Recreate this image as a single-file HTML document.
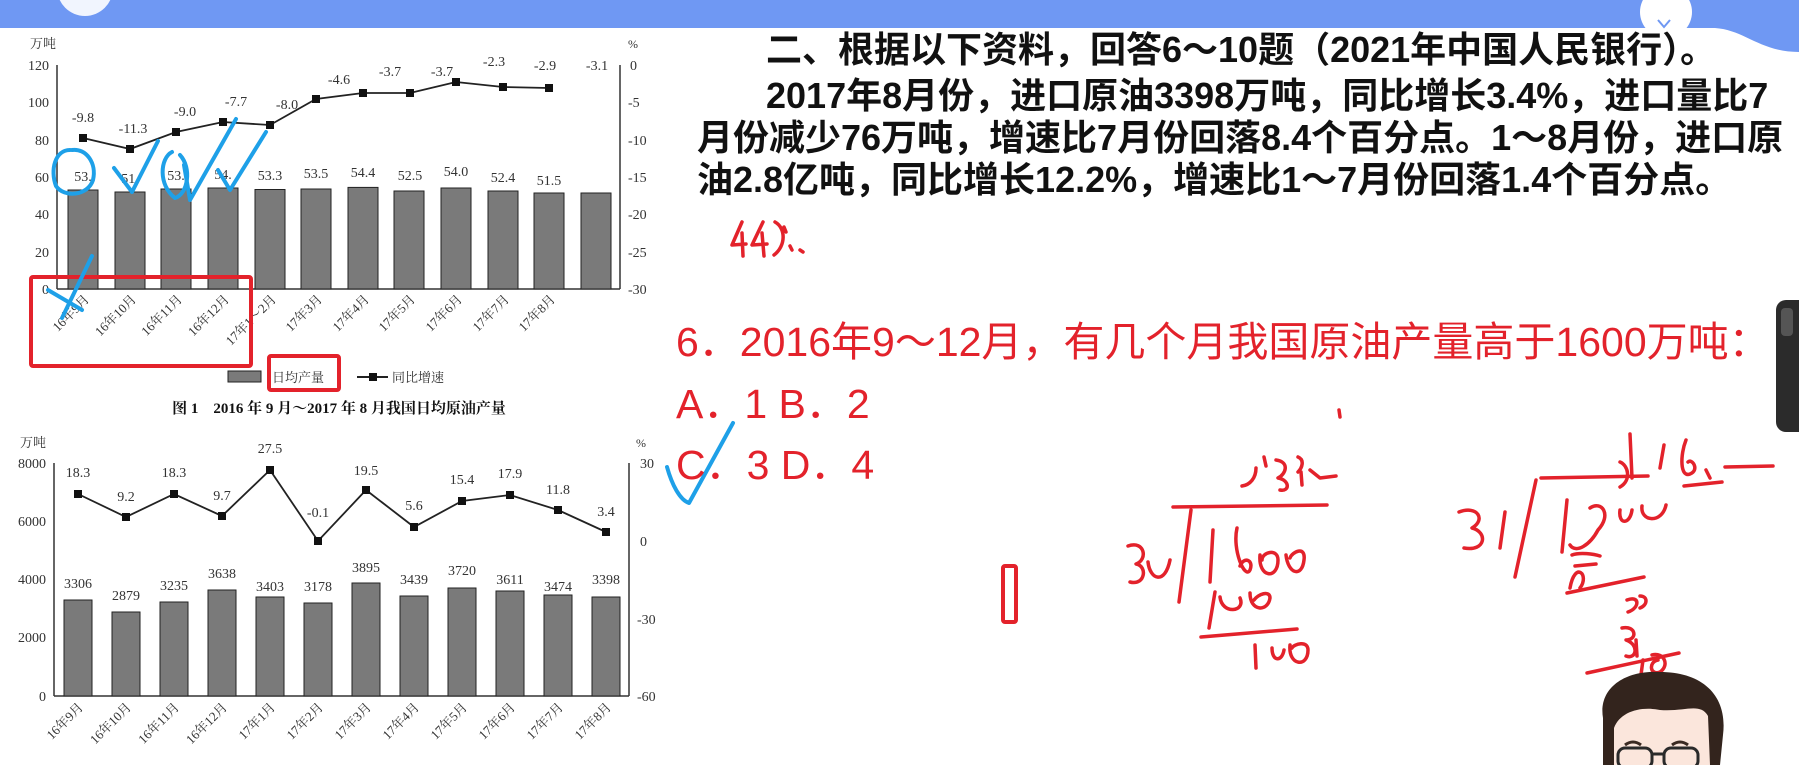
<!DOCTYPE html>
<html><head><meta charset="utf-8"><style>
html,body{margin:0;padding:0;background:#fff;width:1799px;height:765px;overflow:hidden;position:relative}
svg{position:absolute;left:0;top:0}
.p{position:absolute;white-space:nowrap;font-family:"Liberation Sans","Noto Sans CJK SC",sans-serif;font-weight:bold;font-size:36px;color:#111;line-height:42px}
.q{position:absolute;white-space:nowrap;font-family:"Liberation Sans","Noto Sans CJK SC",sans-serif;font-size:41px;color:#e3222b;line-height:48px}
</style></head><body>
<svg width="1799" height="765" viewBox="0 0 1799 765">
<path d="M0 0 H1799 V52 C1760 52 1745 30 1715 28 H0 Z" fill="#6f98f3"/>
<circle cx="85" cy="-12" r="28" fill="#fff" opacity="0.9"/>
<circle cx="1666" cy="12" r="26" fill="#fff"/>
<path d="M1658 20 L1664 27 L1670 20" stroke="#6f98f3" stroke-width="2" fill="none"/>
<rect x="1776" y="300" width="40" height="132" rx="10" fill="#2b2b2b"/>
<rect x="1781" y="308" width="12" height="28" rx="4" fill="#555"/>

<g font-family="Liberation Serif,'Noto Serif CJK SC',serif" font-size="14" fill="#333">
<text x="30" y="48" font-size="13">万吨</text><text x="628" y="48" font-size="12">%</text>
<line x1="57" y1="65" x2="57" y2="289" stroke="#333" stroke-width="1.5"/>
<line x1="620" y1="65" x2="620" y2="289" stroke="#333" stroke-width="1.5"/>
<line x1="57" y1="289" x2="620" y2="289" stroke="#333" stroke-width="1.5"/>
<g text-anchor="end"><text x="49" y="70">120</text><text x="49" y="107">100</text><text x="49" y="145">80</text><text x="49" y="182">60</text><text x="49" y="219">40</text><text x="49" y="257">20</text><text x="49" y="294">0</text></g>
<g><text x="630" y="70">0</text><text x="628" y="107">-5</text><text x="628" y="145">-10</text><text x="628" y="182">-15</text><text x="628" y="219">-20</text><text x="628" y="257">-25</text><text x="628" y="294">-30</text></g>
<g fill="#7a7a7a" stroke="#222" stroke-width="1">
<rect x="68" y="190" width="30" height="99"/><rect x="115" y="192" width="30" height="97"/><rect x="161" y="189" width="30" height="100"/><rect x="208" y="188" width="30" height="101"/><rect x="255" y="189.5" width="30" height="99.5"/><rect x="301" y="189" width="30" height="100"/><rect x="348" y="187.4" width="30" height="101.6"/><rect x="394" y="191" width="30" height="98"/><rect x="441" y="188" width="30" height="101"/><rect x="488" y="191" width="30" height="98"/><rect x="534" y="193" width="30" height="96"/><rect x="581" y="193" width="30" height="96"/>
</g>
<g text-anchor="middle"><text x="83" y="181">53.</text><text x="130" y="183">51.</text><text x="176" y="180">53.</text><text x="223" y="179">54.</text><text x="270" y="180">53.3</text><text x="316" y="178">53.5</text><text x="363" y="177">54.4</text><text x="410" y="180">52.5</text><text x="456" y="176">54.0</text><text x="503" y="182">52.4</text><text x="549" y="185">51.5</text></g>
<polyline points="83,138 130,149 176,132 223,122 270,125 316,99 363,93 410,93 456,82 503,87 549,88" fill="none" stroke="#222" stroke-width="1.8"/>
<g fill="#111"><rect x="79" y="134" width="8" height="8"/><rect x="126" y="145" width="8" height="8"/><rect x="172" y="128" width="8" height="8"/><rect x="219" y="118" width="8" height="8"/><rect x="266" y="121" width="8" height="8"/><rect x="312" y="95" width="8" height="8"/><rect x="359" y="89" width="8" height="8"/><rect x="406" y="89" width="8" height="8"/><rect x="452" y="78" width="8" height="8"/><rect x="499" y="83" width="8" height="8"/><rect x="545" y="84" width="8" height="8"/></g>
<g text-anchor="middle"><text x="83" y="122">-9.8</text><text x="133" y="133">-11.3</text><text x="185" y="116">-9.0</text><text x="236" y="106">-7.7</text><text x="287" y="109">-8.0</text><text x="339" y="84">-4.6</text><text x="390" y="76">-3.7</text><text x="442" y="76">-3.7</text><text x="494" y="66">-2.3</text><text x="545" y="70">-2.9</text><text x="597" y="70">-3.1</text></g>
<g font-size="13" text-anchor="end">
<text transform="translate(90,300) rotate(-45)">16年9月</text><text transform="translate(137,300) rotate(-45)">16年10月</text><text transform="translate(183,300) rotate(-45)">16年11月</text><text transform="translate(230,300) rotate(-45)">16年12月</text><text transform="translate(277,300) rotate(-45)">17年1～2月</text><text transform="translate(323,300) rotate(-45)">17年3月</text><text transform="translate(370,300) rotate(-45)">17年4月</text><text transform="translate(416,300) rotate(-45)">17年5月</text><text transform="translate(463,300) rotate(-45)">17年6月</text><text transform="translate(510,300) rotate(-45)">17年7月</text><text transform="translate(556,300) rotate(-45)">17年8月</text></g>
<rect x="228" y="371" width="33" height="11" fill="#7a7a7a" stroke="#222"/>
<text x="272" y="382" font-size="13">日均产量</text>
<line x1="357" y1="377" x2="388" y2="377" stroke="#222" stroke-width="2"/><rect x="369" y="373" width="8" height="8" fill="#111"/>
<text x="392" y="382" font-size="13">同比增速</text>
<text x="339" y="413" text-anchor="middle" font-weight="bold" font-size="15" fill="#111">图 1　2016 年 9 月～2017 年 8 月我国日均原油产量</text>

<text x="20" y="447" font-size="13">万吨</text><text x="636" y="447" font-size="12">%</text>
<line x1="54" y1="463" x2="54" y2="696" stroke="#333" stroke-width="1.5"/>
<line x1="629" y1="463" x2="629" y2="696" stroke="#333" stroke-width="1.5"/>
<line x1="54" y1="696" x2="629" y2="696" stroke="#333" stroke-width="1.5"/>
<g text-anchor="end"><text x="46" y="468">8000</text><text x="46" y="526">6000</text><text x="46" y="584">4000</text><text x="46" y="642">2000</text><text x="46" y="701">0</text></g>
<g><text x="640" y="468">30</text><text x="640" y="546">0</text><text x="637" y="624">-30</text><text x="637" y="701">-60</text></g>
<g fill="#7a7a7a" stroke="#222" stroke-width="1">
<rect x="64" y="600" width="28" height="96"/><rect x="112" y="612" width="28" height="84"/><rect x="160" y="602" width="28" height="94"/><rect x="208" y="590" width="28" height="106"/><rect x="256" y="597" width="28" height="99"/><rect x="304" y="603" width="28" height="93"/><rect x="352" y="583" width="28" height="113"/><rect x="400" y="596" width="28" height="100"/><rect x="448" y="588" width="28" height="108"/><rect x="496" y="591" width="28" height="105"/><rect x="544" y="595" width="28" height="101"/><rect x="592" y="597" width="28" height="99"/></g>
<g text-anchor="middle"><text x="78" y="588">3306</text><text x="126" y="600">2879</text><text x="174" y="590">3235</text><text x="222" y="578">3638</text><text x="270" y="591">3403</text><text x="318" y="591">3178</text><text x="366" y="572">3895</text><text x="414" y="584">3439</text><text x="462" y="575">3720</text><text x="510" y="584">3611</text><text x="558" y="591">3474</text><text x="606" y="584">3398</text></g>
<polyline points="78,494 126,517 174,494 222,516 270,470 318,541 366,490 414,527 462,501 510,495 558,510 606,532" fill="none" stroke="#222" stroke-width="1.8"/>
<g fill="#111"><rect x="74" y="490" width="8" height="8"/><rect x="122" y="513" width="8" height="8"/><rect x="170" y="490" width="8" height="8"/><rect x="218" y="512" width="8" height="8"/><rect x="266" y="466" width="8" height="8"/><rect x="314" y="537" width="8" height="8"/><rect x="362" y="486" width="8" height="8"/><rect x="410" y="523" width="8" height="8"/><rect x="458" y="497" width="8" height="8"/><rect x="506" y="491" width="8" height="8"/><rect x="554" y="506" width="8" height="8"/><rect x="602" y="528" width="8" height="8"/></g>
<g text-anchor="middle"><text x="78" y="477">18.3</text><text x="126" y="501">9.2</text><text x="174" y="477">18.3</text><text x="222" y="500">9.7</text><text x="270" y="453">27.5</text><text x="318" y="517">-0.1</text><text x="366" y="475">19.5</text><text x="414" y="510">5.6</text><text x="462" y="484">15.4</text><text x="510" y="478">17.9</text><text x="558" y="494">11.8</text><text x="606" y="516">3.4</text></g>
<g font-size="13" text-anchor="end">
<text transform="translate(84,708) rotate(-45)">16年9月</text><text transform="translate(132,708) rotate(-45)">16年10月</text><text transform="translate(180,708) rotate(-45)">16年11月</text><text transform="translate(228,708) rotate(-45)">16年12月</text><text transform="translate(276,708) rotate(-45)">17年1月</text><text transform="translate(324,708) rotate(-45)">17年2月</text><text transform="translate(372,708) rotate(-45)">17年3月</text><text transform="translate(420,708) rotate(-45)">17年4月</text><text transform="translate(468,708) rotate(-45)">17年5月</text><text transform="translate(516,708) rotate(-45)">17年6月</text><text transform="translate(564,708) rotate(-45)">17年7月</text><text transform="translate(612,708) rotate(-45)">17年8月</text></g>
</g>

<rect x="31" y="277" width="220" height="89" fill="none" stroke="#e3222b" stroke-width="4" rx="2"/>
<rect x="269" y="356" width="70" height="34" fill="none" stroke="#e3222b" stroke-width="4" rx="2"/>
<rect x="1003" y="566" width="13" height="56" fill="none" stroke="#e3222b" stroke-width="4" rx="2"/>

<g fill="none" stroke="#1ea0e8" stroke-width="4" stroke-linecap="round" stroke-linejoin="round">
<path d="M70 150 C55 150 50 170 56 186 C64 198 88 196 93 180 C97 163 86 148 72 150"/>
<path d="M114 168 L132 192 L158 141"/>
<path d="M172 152 C160 158 158 185 175 198 C188 194 192 168 180 155"/>
<path d="M184 165 L190 200 L236 119"/>
<path d="M218 170 L230 190 L266 132"/>
<path d="M92 256 L62 318"/>
<path d="M48 290 L82 310"/>
<path d="M733 423 L689 503 C680 500 672 485 667 467"/>
</g>

<g fill="none" stroke="#e3222b" stroke-width="3.5" stroke-linecap="round" stroke-linejoin="round">
<path d="M742 222 L732 245 L746 244 M742 233 L743 256"/>
<path d="M763 222 L752 245 L767 244 M762 233 L764 256"/>
<path d="M775 222 C786 228 786 246 774 255 M784 227 L786 232 M790 246 L792 250 M800 250 L803 252"/>
<path d="M1339 410 L1340 417"/>
<path d="M1242 486 C1250 485 1256 478 1256 468 M1264 457 L1266 466 M1276 460 C1290 462 1286 474 1278 478 C1290 480 1290 492 1280 490 M1298 457 C1305 460 1302 468 1298 472 M1301 472 L1302 485 M1310 470 L1320 478 L1336 476"/>
<path d="M1173 507 L1327 505"/>
<path d="M1191 510 L1179 602"/>
<path d="M1128 546 C1145 540 1148 560 1136 564 C1148 566 1145 586 1130 582 M1148 562 C1150 580 1165 585 1170 560"/>
<path d="M1213 530 L1210 582"/>
<path d="M1237 528 C1232 550 1245 580 1250 570 C1254 560 1244 556 1240 566 M1260 555 C1258 578 1278 580 1278 560 C1278 548 1262 552 1262 560 M1286 555 C1288 574 1302 578 1304 560 C1306 545 1292 552 1290 558"/>
<path d="M1215 592 L1209 628 M1220 597 C1222 615 1246 612 1240 598 M1250 593 C1250 612 1268 612 1270 598 C1270 590 1258 594 1254 600"/>
<path d="M1201 637 L1297 629"/>
<path d="M1255 645 L1256 668 M1272 648 C1272 662 1282 662 1284 650 M1290 645 C1288 666 1308 668 1308 650 C1308 640 1294 644 1292 648"/>
<path d="M1459 512 C1478 505 1486 520 1472 528 C1488 532 1486 552 1464 548"/>
<path d="M1505 512 L1500 548"/>
<path d="M1536 480 L1515 577"/>
<path d="M1541 478 L1648 476"/>
<path d="M1630 434 L1632 478 M1620 462 C1628 465 1632 480 1620 487"/>
<path d="M1664 445 L1660 468 M1686 440 C1680 455 1680 478 1690 474 C1700 470 1692 458 1688 462 M1684 486 L1722 482 M1706 470 L1710 478 M1725 467 L1773 466"/>
<path d="M1567 500 L1562 552"/>
<path d="M1590 508 C1602 500 1612 515 1598 530 C1590 545 1576 554 1570 545 M1620 510 C1618 525 1630 525 1632 510 M1642 506 C1640 522 1662 524 1666 505"/>
<path d="M1572 555 C1580 552 1594 554 1600 556 M1575 566 L1596 564 M1570 588 C1575 560 1590 575 1580 588"/>
<path d="M1567 593 L1644 577"/>
<path d="M1627 600 C1640 595 1640 608 1628 612 M1640 596 C1648 596 1648 605 1640 608"/>
<path d="M1622 628 C1636 625 1638 640 1626 640 C1640 645 1636 660 1626 656 M1636 640 L1637 656"/>
<path d="M1587 673 L1679 653"/>
<path d="M1643 660 L1640 682 M1652 655 C1664 652 1670 665 1660 672 C1650 676 1648 662 1658 660"/>
</g>

<g>
<path d="M1603 765 L1603 718 C1598 688 1625 670 1660 672 C1702 672 1728 695 1723 735 L1720 765 Z" fill="#33241d"/>
<path d="M1614 765 L1614 728 C1620 712 1640 706 1660 710 C1685 712 1700 702 1708 716 L1710 765 Z" fill="#fbe6dc"/>
<g fill="none" stroke="#2a2a2a" stroke-width="3"><rect x="1618" y="748" width="34" height="20" rx="7"/><rect x="1664" y="748" width="34" height="20" rx="7"/><path d="M1652 754 L1664 754"/></g>
<path d="M1625 745 q8 -6 16 0 M1672 745 q8 -6 16 0" stroke="#3a2a22" stroke-width="3" fill="none"/>
</g>
</svg>

<div class="p" style="left:766px;top:29px">二、根据以下资料，回答6～10题（2021年中国人民银行）。</div>
<div class="p" style="left:766px;top:75px">2017年8月份，进口原油3398万吨，同比增长3.4%，进口量比7</div>
<div class="p" style="left:697px;top:117px">月份减少76万吨，增速比7月份回落8.4个百分点。1～8月份，进口原</div>
<div class="p" style="left:697px;top:159px">油2.8亿吨，同比增长12.2%，增速比1～7月份回落1.4个百分点。</div>

<div class="q" style="left:676px;top:318px">6．2016年9～12月，有几个月我国原油产量高于1600万吨：</div>
<div class="q" style="left:676px;top:380px">A．1 B．2</div>
<div class="q" style="left:676px;top:441px">C．3 D．4</div>
</body></html>
